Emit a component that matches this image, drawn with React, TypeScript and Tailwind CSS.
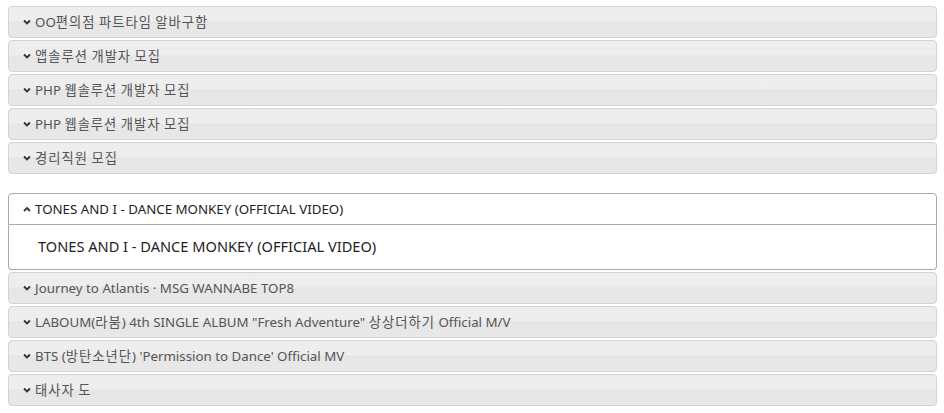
import React from 'react';

const groupOne = [
  'OO편의점 파트타임 알바구함',
  '앱솔루션 개발자 모집',
  'PHP 웹솔루션 개발자 모집',
  'PHP 웹솔루션 개발자 모집',
  '경리직원 모집',
];

const groupTwoRest = [
  'Journey to Atlantis · MSG WANNABE TOP8',
  'LABOUM(라붐) 4th SINGLE ALBUM "Fresh Adventure" 상상더하기 Official M/V',
  "BTS (방탄소년단) 'Permission to Dance' Official MV",
  '태사자 도',
];

const font = "font-['Noto_Sans','Noto_Sans_CJK_KR',sans-serif]";

// hangul in the screenshot runs wider than Noto CJK, so pad those runs a bit
function Label({ text }: { text: string }) {
  const parts = text.split(/([\uAC00-\uD7A3]+)/);
  return (
    <span className="leading-none pt-[1px] whitespace-pre">
      {parts.map((p, i) =>
        /[\uAC00-\uD7A3]/.test(p) ? (
          <span key={i} className="tracking-[1px]">{p}</span>
        ) : (
          <span key={i}>{p}</span>
        )
      )}
    </span>
  );
}

function Chevron({ up }: { up?: boolean }) {
  return (
    <svg width="8" height="6" viewBox="0 0 8 6" className="shrink-0">
      <path
        d={up ? 'M1 5 L4 2 L7 5' : 'M1 1.5 L4 4.5 L7 1.5'}
        fill="none"
        stroke="#333"
        strokeWidth="1.8"
      />
    </svg>
  );
}

function Header({ title }: { title: string }) {
  return (
    <div className="mt-[2px] h-[32px] flex items-center gap-[4px] pl-[14px] border border-[#d3d3d3] rounded-[4px] bg-[linear-gradient(to_bottom,#ededed_0%,#eeeeee_45%,#e6e6e6_50%,#e8e8e8_100%)] text-[13.3px] text-[#555]">
      <Chevron />
      <Label text={title} />
    </div>
  );
}

export default function App() {
  return (
    <main className={`min-h-screen bg-white pl-[8px] pr-[7px] pt-[4px] ${font}`}>
      <section className="flex flex-col">
        {groupOne.map((t, i) => (
          <Header key={i} title={t} />
        ))}
      </section>

      <section className="flex flex-col mt-[17px]">
        <div className="mt-[2px] h-[32px] flex items-center gap-[4px] pl-[14px] border border-[#aaa] rounded-t-[4px] bg-white text-[13.3px] text-[#222]">
          <Chevron up />
          <Label text="TONES AND I - DANCE MONKEY (OFFICIAL VIDEO)" />
        </div>
        <div className="h-[45px] flex items-center pl-[29px] border border-t-0 border-[#aaa] rounded-b-[4px] bg-white text-[14.6px] text-[#222]">
          TONES AND I - DANCE MONKEY (OFFICIAL VIDEO)
        </div>
        {groupTwoRest.map((t, i) => (
          <Header key={i} title={t} />
        ))}
      </section>
    </main>
  );
}
